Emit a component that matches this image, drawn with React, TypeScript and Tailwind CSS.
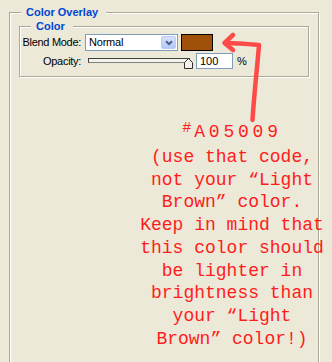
import React from "react";

const ui = { fontFamily: '"Liberation Sans", Arial, sans-serif' };
const mono = { fontFamily: '"Liberation Mono", "Courier New", monospace' };

function GroupTitle({ text, left }: { text: string; left: string }) {
    return (
        <span
            className={`absolute ${left} -top-[7px] bg-[#ece9d8] pl-[5px] pr-[8px] text-[11px] leading-[13px] font-bold text-[#0046d5]`}
        >
            {text}
        </span>
    );
}

function BlendSelect() {
    return (
        <div className="flex items-center w-[93px] h-[17px] border border-[#7f9db9] bg-white">
            <span className="flex-1 pl-[3px] text-[11px] leading-[15px] tracking-[-0.2px] text-black">Normal</span>
            <div className="mr-[1px] w-[15px] h-[13px] rounded-[2px] border border-[#b9cbf3] bg-[linear-gradient(#d6e2fd,#b3c8f8)] flex items-center justify-center">
                <svg width="8" height="6" viewBox="0 0 8 6">
                    <path d="M1 1.2 L4 4.2 L7 1.2" fill="none" stroke="#4d6185" strokeWidth="2" />
                </svg>
            </div>
        </div>
    );
}

function OpacitySlider() {
    return (
        <div className="relative w-[105px] h-[16px]">
            <div className="absolute left-0 top-[5px] w-[102px] h-[5px] border border-[#404040] border-b-[#808080] bg-[#f4f3ea]" />
            <svg className="absolute left-[96px] top-[5px]" width="10" height="11" viewBox="0 0 10 11">
                <polygon points="0.5,4.5 4.5,0.5 8.5,4.5 8.5,10.5 0.5,10.5" fill="#f3f2ea" stroke="#303030" strokeWidth="1" />
            </svg>
        </div>
    );
}

export default function App() {
    return (
        <div className="relative w-[332px] h-[362px] overflow-hidden bg-[#ece9d8] pt-[12px]" style={ui}>
            {/* outer group: Color Overlay */}
            <div className="relative ml-[9px] w-[310px] h-[400px] border border-[#aca899] shadow-[inset_1px_1px_0_#fff,1px_1px_0_#fff] pt-[13px] pl-[9px]">
                <GroupTitle text="Color Overlay" left="left-[11px]" />

                {/* inner group: Color */}
                <div className="relative w-[290px] h-[51px] border border-[#aca899] shadow-[inset_1px_1px_0_#fff,1px_1px_0_#fff] pt-[7px]">
                    <GroupTitle text="Color" left="left-[11px]" />

                    <div className="flex items-center">
                        <span className="w-[61px] text-right text-[11px] leading-[13px] tracking-[-0.3px] text-black">Blend Mode:</span>
                        <div className="ml-[4px]">
                            <BlendSelect />
                        </div>
                        <div className="ml-[3px] w-[32px] h-[17px] border border-black bg-[#a05009]" />
                    </div>

                    <div className="flex items-center mt-[2px]">
                        <span className="w-[61px] text-right text-[11px] leading-[13px] tracking-[-0.3px] text-black">Opacity:</span>
                        <div className="ml-[7px]">
                            <OpacitySlider />
                        </div>
                        <div className="ml-[3px] w-[37px] h-[16px] border border-[#7f9db9] bg-white pl-[3px] text-[11px] leading-[14px] text-black">
                            100
                        </div>
                        <span className="ml-[4px] text-[11px] leading-[13px] text-black">%</span>
                    </div>
                </div>
            </div>

            {/* hand-drawn arrow */}
            <svg className="absolute inset-0 pointer-events-none" width="332" height="362" viewBox="0 0 332 362">
                <defs>
                    <filter id="soft" x="-10%" y="-10%" width="120%" height="120%">
                        <feGaussianBlur stdDeviation="0.7" />
                    </filter>
                </defs>
                <g fill="none" stroke="#ff3a3a" strokeWidth="4.5" strokeLinecap="round" strokeLinejoin="round" filter="url(#soft)" opacity="0.9">
                    <path d="M252.5 120 C254 95 257 70 259 45 C248 44 236 43 225 43" />
                    <path d="M233 35 L224.5 43 L233 50" />
                </g>
            </svg>

            {/* annotation */}
            <div
                className="absolute left-[132px] top-[121px] w-[200px] text-center text-[18px] leading-[22.75px] text-[#ff1c1c]"
                style={mono}
            >
                <div>
                    <span className="relative -top-[5px] text-[15px]">#</span>
                    <span className="ml-[3px] tracking-[3.8px]">A05009</span>
                </div>
                <div>(use that code,</div>
                <div>not your “Light</div>
                <div>Brown” color.</div>
                <div>Keep in mind that</div>
                <div>this color should</div>
                <div>be lighter in</div>
                <div>brightness than</div>
                <div>your “Light</div>
                <div>Brown” color!)</div>
            </div>
        </div>
    );
}
